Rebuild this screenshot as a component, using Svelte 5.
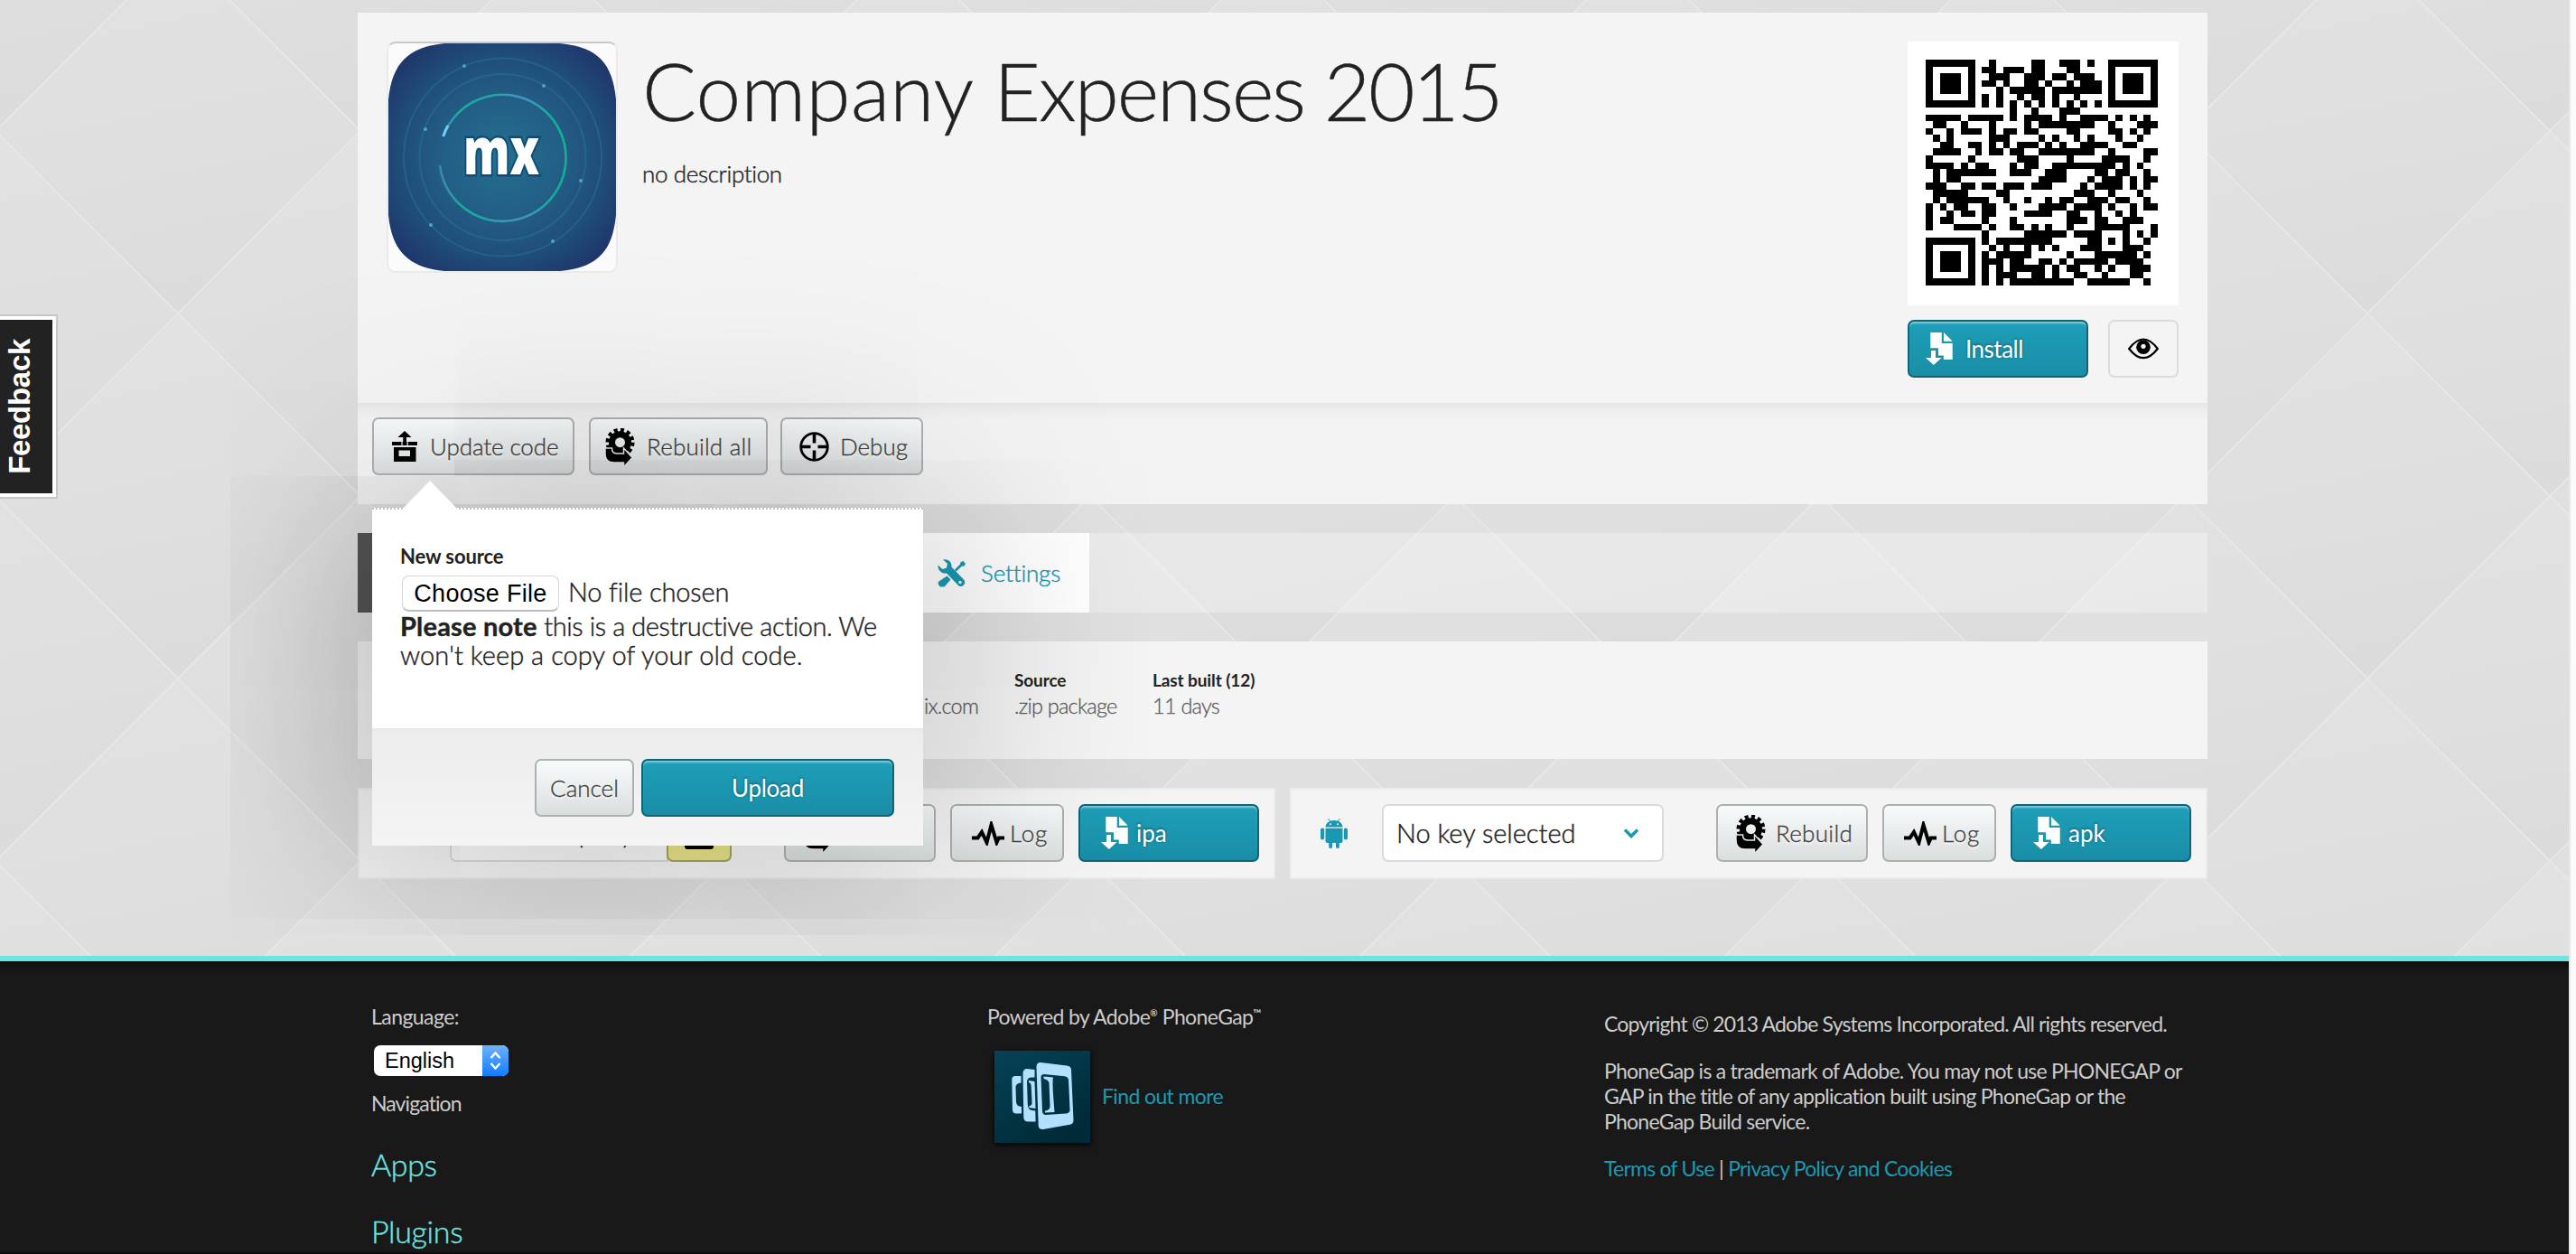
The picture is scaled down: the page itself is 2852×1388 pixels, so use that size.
<script>
  // Filled column ranges of each row of the code, "a-b" inclusive.
  const code = [
    '0-6 9 15-16 19-21 23 26-32', '0 6 8-9 11-13 15-16 20-21 26 32', '0 2-4 6 9-11 14-16 18-19 21-23 26 28-30 32',
    '0 2-4 6 8-9 11 14-15 17 20 22-24 26 28-30 32', '0 2-4 6 10 12-16 18-24 26 28-30 32', '0 6 8 10 13 15-16 18 21 26 32',
    '0-6 8 10 12 14 16 18 20 22 24 26-32', '12 15 19-21', '0-4 6-10 12 14-17 19 22-25 27 29 31', '1-2 5 9 14 16-23 26 30-32',
    '0 3 5-7 9 11-12 14-15 20-21 26-27 29 31', '1 3 9-11 16 18 21 23 27 30', '2-3 6-7 9 11 13-15 17 19 22-25 28-29',
    '1-4 7 9-10 12-13 16-23 26 31-32', '0 6 13-15 20 25-28 31', '0-3 5 7-8 12 14-15 18-26 28 30', '1 3-9 12-14 17-19 24-25 27-28 31',
    '1 3-4 16-19 23 25-27 29 31-32', '0-2 5-6 8-9 11-13 15-17 22 24-27 29 31', '1-5 10-11 21-23 26 30', '1 3-8 11 14 17 19-20 23-25 27-28 31',
    '0 2 4-5 8-9 12 16-19 21-24 26 29 31-32', '0 3 5-6 8-9 14-17 20-21 24 27 29', '0 2-3 8 12 20-22 24-25 28-30', '0 4-7 9 12-13 15 17 20 24-28 32',
    '8 14-19 21-24 28 30 32', '0-6 8 10-17 23-24 26 28 31', '0 6 9 11 14 16 18 22-24 28-30', '0 2-4 6 8 10-14 20 24-29 31',
    '0 2-4 6 8-10 12-13 16-17 19 21-25 27-30', '0 2-4 6 8 10 12-16 18 20-21 24 26 29-31', '0 6 8 10-12 15-16 18 21-22 25 29-30', '0-6 8 10 12-20 23-28 31'
  ];
  const qrPath = code
    .flatMap((row, y) => row.split(' ').map((run) => {
      const [a, b = a] = run.split('-').map(Number);
      return `M${a} ${y}h${b - a + 1}v1h-${b - a + 1}z`;
    }))
    .join('');
  const dots = [[84, 25], [172, 47], [41, 95], [213, 152], [47, 201], [182, 219]];
</script>

{#snippet uploadIcon()}
  <svg width="28" height="34" viewBox="0 0 28 34"><path fill-rule="evenodd" d="M14 0 21.500 7H16v5h12v4H0v-4h12.300V7H6.500zM2 18h24.500v16H2zM7.500 21.500V28h12.500v-6.500z" /><path class="cut" d="M11 11.500v4.500M17.200 11.500v4.500" /></svg>
{/snippet}
{#snippet gearIcon()}
  <svg width="33" height="42" viewBox="0 0 33 42">
    <circle class="teeth" cx="16.500" cy="15.700" r="13.500" /><circle class="gear" cx="16.500" cy="15.700" r="9" />
    <path class="edge" d="M0 22h7.500c0 4 2 6 5 6h8v-6l9.500 10.500L20.500 43v-5H10C3 38 0 34 0 28z" />
  </svg>
{/snippet}
{#snippet targetIcon()}
  <svg width="33" height="33" viewBox="0 0 33 33"><g class="line"><circle cx="16.500" cy="16.500" r="14.800" stroke-width="2.800" /><path stroke-width="3.600" d="M16.500 1v11.500M16.500 20.500V32M1 16.500h11.500M20.500 16.500H32" /></g></svg>
{/snippet}
{#snippet logIcon()}
  <svg width="36" height="27" viewBox="0 0 36 27"><path class="line" stroke-width="4" d="M0 18.500H6.500L11 12l5.500 11.500L21.500 4l6 19.500 2.300-5H36" /></svg>
{/snippet}
{#snippet docIcon()}
  <svg width="30" height="36" viewBox="0 0 30 36"><path d="M5.300 0h12.400v12h12v18H19.800v-4.500H14v-8.200H5.300zM20 0l9.700 9.700H20zM6 20h5v8h6.600L8.800 36 0 28h6z" /></svg>
{/snippet}

<div class="page">
  <svg class="backdrop" width="2844" height="1058">
    <defs>
      <linearGradient id="facet" x1="0.3" y1="0" x2="0.5" y2="1"><stop offset="0" stop-color="#e2e2e2" /><stop offset="0.55" stop-color="#dfdfdf" /><stop offset="1" stop-color="#dbdbdb" /></linearGradient>
      <pattern id="diamonds" x="197" y="347" width="404" height="404" patternUnits="userSpaceOnUse">
        <g fill="url(#facet)" stroke="#e7e7e7" stroke-width="1.800">
          <path d="M0 0 202 202 0 404-202 202z" /><path d="M404 0 606 202 404 404 202 202z" />
          <path d="M202-202 404 0 202 202 0 0z" /><path d="M202 202 404 404 202 606 0 404z" />
        </g>
      </pattern>
    </defs>
    <rect width="2844" height="1058" fill="url(#diamonds)" />
  </svg>

  <div class="feedback"><span>Feedback</span></div>

  <main>
    <header class="hero">
      <div class="app-icon">
        <svg width="252" height="252" viewBox="0 0 252 252">
          <defs>
            <radialGradient id="sky" r="0.62"><stop offset="0" stop-color="#23708f" /><stop offset="0.4" stop-color="#235f87" /><stop offset="0.75" stop-color="#1f4b79" /><stop offset="1" stop-color="#1f3569" /></radialGradient>
            <linearGradient id="ring" x1="0" y1="0" x2="1" y2="0"><stop offset="0" stop-color="#3a86b5" /><stop offset="0.2" stop-color="#18b09a" /><stop offset="0.45" stop-color="#2aa0a8" /><stop offset="0.65" stop-color="#4493c4" /><stop offset="0.9" stop-color="#15ae97" /></linearGradient>
          </defs>
          <path fill="url(#sky)" d="M62 0H190C232 4 248 22 252 62V190C248 230 232 248 190 252H62C22 248 4 230 0 190V62C4 22 22 4 62 0z" />
          <g fill="none" stroke="#2a7f98" stroke-width="2" opacity="0.4"><circle cx="126.500" cy="126" r="92" /><circle cx="126.500" cy="126" r="109.500" /></g>
          <path d="M60.700 103A70 70 0 1 1 57 135" fill="none" stroke="url(#ring)" stroke-width="2.600" />
          <path d="M60.700 103A70 70 0 0 1 66 91" fill="none" stroke="#6bd0f5" stroke-width="3" />
          {#each dots as [x, y]}<circle cx={x} cy={y} r="2" fill="#4da3cf" />{/each}
          <text x="83" y="145" textLength="84" lengthAdjust="spacingAndGlyphs">mx</text>
        </svg>
      </div>
      <div class="title"><h1><span class="company">Company</span> <span class="expenses">Expenses</span> <span class="year">2015</span></h1><p>no description</p></div>
      <div class="install">
        <div class="qr"><svg width="257" height="250" viewBox="0 0 33 33" preserveAspectRatio="none" shape-rendering="crispEdges"><path d={qrPath} /></svg></div>
        <div class="install-row">
          <button class="btn teal w200"><i class="ic l">{@render docIcon()}</i><span class="s-install">Install</span></button>
          <button class="btn eye" aria-label="Visibility"><svg width="34" height="24" viewBox="0 0 34 24"><path class="line" stroke-width="2.200" d="M1.200 12Q9 1.500 17 1.500T32.800 12Q25 22.200 17 22.200T1.200 12z" /><circle cx="17" cy="10.300" r="7.800" /><circle cx="17" cy="9.300" r="2.600" fill="#f4f4f4" /></svg></button>
        </div>
      </div>
    </header>

    <nav class="toolbar">
      <button class="btn b-update"><i class="ic">{@render uploadIcon()}</i><span class="s-update">Update code</span></button>
      <button class="btn b-all"><i class="ic l">{@render gearIcon()}</i><span class="s-all">Rebuild all</span></button>
      <button class="btn b-debug"><i class="ic">{@render targetIcon()}</i><span>Debug</span></button>
    </nav>

    <div class="tabs">
      <div class="tab dark"></div>
      <div class="tab light">
        <svg width="31" height="31" viewBox="0 0 31 31"><path d="M6 .5C12-.5 16 3 15.500 8.500L29.500 23c2.500 4-2 8.500-6 6.500L10 15.500C5 16.500 0 12.500 .5 6.500L5.500 11 10 9.500 11 5z" /><path d="M19 11.500 25.500 5 25 3.500 28.500 2 31 5l-2 3-2-.5-6.500 6.300zM10.500 18.500l4 4-7 8H3L.8 28v-3z" /><circle cx="25" cy="25.500" r="1.700" fill="#f4f4f4" /></svg>
        <span>Settings</span>
      </div>
    </div>

    <section class="info">
      <dl class="owner"><dt>&nbsp;</dt><dd>ix.com</dd></dl>
      <dl class="source"><dt>Source</dt><dd>.zip package</dd></dl>
      <dl class="built"><dt>Last built (12)</dt><dd>11 days</dd></dl>
    </section>

    <div class="platforms">
      <section class="platform">
        <div class="key ios">Company</div>
        <button class="btn lock" aria-label="Lock"><svg width="32" height="30" viewBox="0 0 32 30"><rect y="8" width="32" height="22" rx="3" /></svg></button>
        <button class="btn b-rebuild"><i class="ic">{@render gearIcon()}</i><span>Rebuild</span></button>
        <button class="btn b-log"><i class="ic r">{@render logIcon()}</i><span>Log</span></button>
        <button class="btn teal w200"><i class="ic r">{@render docIcon()}</i><span>ipa</span></button>
      </section>
      <section class="platform">
        <svg class="android" width="30" height="33" viewBox="0 0 30 33"><path d="M5.500 9.500C5.500 5 10 2 15 2s9.500 3 9.500 7.500zM5.500 10.800h19V25q0 2-2 2h-1.700v4.500q0 1.500-1.900 1.500T17 31.500V27h-4v4.500q0 1.500-1.900 1.500t-1.900-1.500V27H7.500q-2 0-2-2z" /><rect y="10.500" width="4.200" height="13" rx="2.100" /><rect x="25.800" y="10.500" width="4.200" height="13" rx="2.100" /><path d="M8.500 0l2.500 3.500M21.500 0 19 3.500" stroke="#1b98b1" /><circle cx="11" cy="6.300" r="1" fill="#f4f4f4" /><circle cx="19" cy="6.300" r="1" fill="#f4f4f4" /></svg>
        <div class="key"><span>No key selected</span><svg width="18" height="11" viewBox="0 0 18 11"><path class="chev" d="M2 1.500 9 8.500 16 1.500" /></svg></div>
        <button class="btn b-rebuild"><i class="ic">{@render gearIcon()}</i><span>Rebuild</span></button>
        <button class="btn b-log"><i class="ic r">{@render logIcon()}</i><span>Log</span></button>
        <button class="btn teal w200"><i class="ic r">{@render docIcon()}</i><span>apk</span></button>
      </section>
    </div>
  </main>

  <div class="shade"></div>
  <div class="shade corner"></div>
  <div class="popover">
    <svg class="tip" width="64" height="33" viewBox="0 0 64 33"><path d="M32 0 64 33H0z" /></svg>
    <div class="body">
      <h2>New source</h2>
      <div class="file"><button>Choose File</button><span>No file chosen</span></div>
      <p><b>Please note</b> this is a destructive action. We<br /><span class="second">won't keep a copy of your old code.</span></p>
    </div>
    <div class="actions"><button class="btn b-cancel">Cancel</button><button class="btn teal b-upload">Upload</button></div>
  </div>

  <footer>
    <div class="col one">
      <p class="language">Language:</p>
      <div class="lang"><span>English</span><i><svg width="13" height="20" viewBox="0 0 13 20"><path d="M1.500 7 6.500 1.500 11.500 7M1.500 13 6.500 18.500 11.500 13" /></svg></i></div>
      <p class="navigation">Navigation</p>
      <a href="#apps" class="apps">Apps</a>
      <a href="#plugins">Plugins</a>
    </div>
    <div class="col two">
      <p>Powered by Adobe<sup>®</sup> PhoneGap<sup class="tm">™</sup></p>
      <div class="gap">
        <svg width="106" height="102" viewBox="0 0 106 102">
          <defs><linearGradient id="deep" x1="0" y1="0" x2="0.6" y2="1"><stop offset="0" stop-color="#054357" /><stop offset="1" stop-color="#002a38" /></linearGradient></defs>
          <rect width="106" height="102" fill="url(#deep)" />
          <g fill="#b3e0ff">
            <path fill-rule="evenodd" d="M51 13 80 16.500q5 .5 5 5L87.500 77q0 4-4 4.700L54 87q-5 .500-5.300-4L46.500 18q0-5 4.500-5zM55 26q-3.500 0-3.500 3.500L53 67q.3 4 4 4l22-1.500q4.500-.3 4.500-4L82 32.500q-.3-4-4.500-4.300z" />
            <path d="M54.500 28.500l10.500 1Q64 33 65 48.500L66.500 68 56 68.500V66.500q6-.5 5.500-6L60.500 36q-.5-4-6-5z" />
            <path d="M36 20l8.500 1v8.500h-3q-5.500 0-5.500 5l.8 25q.4 6 5 6.500l3.500.5.300 12h-8q-5 0-5.300-4.500L31.500 25q.3-5 4.500-5zM38 33l6.500 1 1 30-7-1v-2q3.500 0 3-4l-.8-18q-.2-3.500-2.700-4z" />
            <path d="M23 28l6.500 0v7.500q-6 .5-6 5l.500 16q.300 5 6 5.500v7.500l-6 0q-3.800 0-4-4L19.300 32q0-4 3.700-4z" />
          </g>
        </svg>
        <a href="#more">Find out more</a>
      </div>
    </div>
    <div class="col three">
      <p class="copyright">Copyright © 2013 Adobe Systems Incorporated. All rights reserved.</p>
      <p class="trademark">PhoneGap is a trademark of Adobe. You may not use PHONEGAP or<br />GAP in the title of any application built using PhoneGap or the<br />PhoneGap Build service.</p>
      <p class="terms"><a href="#terms">Terms of Use</a> | <a href="#privacy">Privacy Policy and Cookies</a></p>
    </div>
  </footer>
</div>

<style>
  :global(body) { background: #fafafa; overflow: hidden; }
  .page { position: relative; width: 2844px; height: 1388px; overflow: hidden; display: flex; flex-direction: column; background: #dedede; box-shadow: 2px 0 0 #e8e8e8; font-family: Lato, 'Open Sans', sans-serif; font-weight: 300; color: #222; font-variant-ligatures: none; }
  .page *, .page { box-sizing: border-box; }
  h1, h2, p, dl, dt, dd { margin: 0; font-weight: 300; }
  svg { display: block; flex: none; }
  .backdrop { position: absolute; left: 0; top: 0; }

  .feedback { position: absolute; left: 0; top: 348px; width: 64px; height: 204px; border: 2px solid #c6c6c6; border-left: 0; background: #222; box-shadow: inset 0 0 0 4px #fff; display: grid; place-items: center; }
  .feedback::before { content: ''; position: absolute; left: 0; top: 4px; width: 4px; height: 192px; background: #222; }
  .feedback span { writing-mode: vertical-rl; transform: rotate(180deg); color: #fff; font: bold 33px/40px 'Liberation Sans', sans-serif; letter-spacing: -0.3px; margin-right: 18px; }

  main { position: relative; width: 2048px; margin: 14px 0 0 396px; height: 1044px; flex: none; }
  .hero { display: flex; height: 432px; background: #f4f4f4; padding: 32px 32px 0; }
  .app-icon { width: 256px; height: 256px; border: 2px solid #ebebeb; border-top-color: #c8c8c8; border-radius: 10px; background: #fbfbfb; }
  .app-icon text { font: 800 72px 'Open Sans', sans-serif; fill: #fff; stroke: #0e4c78; stroke-width: 5px; paint-order: stroke; }
  .title { padding-left: 27px; flex: 1; }
  h1 { font-size: 89px; line-height: 108px; letter-spacing: -1.45px; word-spacing: -1px; -webkit-text-stroke: 0.4px; }
  .company { letter-spacing: 0.3px; }
  .expenses { letter-spacing: -2px; }
  .year { letter-spacing: -2.6px; }
  .title p { font-size: 26px; line-height: 32px; margin-top: 22px; letter-spacing: -0.35px; -webkit-text-stroke: 0.4px; }
  .install { width: 300px; }
  .qr { width: 300px; height: 292px; background: #fff; padding: 20px 0 0 20px; }
  .install-row { display: flex; justify-content: space-between; margin-top: 16px; }

  .btn { font: 300 26px/60px Lato, sans-serif; font-variant-ligatures: none; color: #3f3f3f; height: 64px; padding: 0; border: 2px solid #aeb0b0; border-radius: 7px; background: linear-gradient(#f8fbfc, #dadede); display: flex; align-items: center; text-shadow: 0 2px 2px #fff; white-space: nowrap; -webkit-text-stroke: 0.35px; }
  .btn.teal { color: #fff; font-weight: 400; -webkit-text-stroke: 0; border-color: #0f6476; background: linear-gradient(#1e9fb9, #1a8da6); box-shadow: inset 0 3px 2px -1px rgba(255, 255, 255, 0.45); text-shadow: 0 -1px 3px #0f5a6a; }
  .w200 { width: 200px; }
  .ic { width: 44px; margin: 0 8px 0 12px; display: flex; justify-content: center; }
  .ic.l { padding-right: 2px; margin-right: 6px; }
  .ic.r { padding-left: 8px; }
  .teal .ic.r { margin-right: 6px; }
  .b-all .ic.l { padding-right: 3px; }
  .b-update .ic { margin-right: 6px; }
  .b-log .ic.r { padding-left: 11px; }
  .b-debug .ic { padding-left: 3px; }
  .b-rebuild .ic { padding-left: 4px; padding-top: 2px; }
  .b-all .ic { padding-top: 2px; }
  .teal svg { fill: #fff; }
  .teeth { fill: none; stroke: #000; stroke-width: 5px; stroke-dasharray: 3.9 3.169; }
  .gear { fill: none; stroke: #000; stroke-width: 7px; }
  .edge { stroke: #e3e7e8; stroke-width: 1.5px; }
  .cut { stroke: #e9ecee; stroke-width: 1.2px; }
  .line { fill: none; stroke: #000; }
  .eye { width: 78px; justify-content: center; background: #f4f4f4; border-color: #dcdcdc; }
  .s-install { letter-spacing: -0.5px; }
  .s-update { letter-spacing: -0.1px; }
  .s-all { letter-spacing: 0.2px; }

  .toolbar { display: flex; height: 112px; padding: 16px 16px 0; background: linear-gradient(#e6e6e6, #efefef 10px, #f3f3f3 20px); }
  .b-update { width: 224px; margin-right: 16px; }
  .b-all { width: 198px; margin-right: 14px; }
  .b-debug { width: 158px; }

  .tabs { display: flex; height: 88px; margin-top: 32px; background: rgba(255, 255, 255, 0.3); }
  .tab.dark { width: 200px; background: #555; }
  .tab.light { width: 610px; background: #fff; display: flex; align-items: center; justify-content: flex-end; padding-right: 32px; color: #1b98b1; }
  .tab.light svg { fill: #1b98b1; margin-right: 17px; }
  .tab span { font-size: 26px; line-height: 44px; letter-spacing: -0.2px; -webkit-text-stroke: 0.4px; }

  .info { display: flex; height: 130px; margin-top: 32px; background: #f4f4f4; padding-top: 30px; }
  dt { font-size: 19px; line-height: 26px; font-weight: 700; letter-spacing: -0.1px; }
  dd { font-size: 23.5px; line-height: 28px; margin-top: 1px; color: #5c5c5c; letter-spacing: -0.75px; -webkit-text-stroke: 0.3px; }
  .owner { width: 727px; padding-left: 627px; }
  .source { width: 153px; }

  .platforms { display: flex; gap: 16px; margin-top: 32px; }
  .platform { display: flex; width: 1016px; height: 101px; border: 2px solid #ebebeb; background: #f4f4f4; padding: 16px 16px 0; }
  .b-rebuild { width: 168px; margin: 0 16px 0 auto; letter-spacing: 0.3px; }
  .b-log { width: 126px; margin-right: 16px; letter-spacing: 0.8px; }
  .key { display: flex; align-items: center; justify-content: space-between; width: 312px; height: 64px; border: 2px solid #dadada; border-radius: 7px; background: #fff; font-size: 29px; line-height: 60px; padding: 0 25px 0 14px; -webkit-text-stroke: 0.4px; }
  .key.ios { margin-left: 84px; width: 242px; padding-left: 82px; background: #f8f8f8; border-radius: 7px 0 0 7px; }
  .lock { width: 72px; margin-left: -2px; justify-content: center; background: #e6e48a; border-color: #a3a35c; padding-top: 6px; }
  .android { fill: #1b98b1; margin: 16px 38px 0 16px; }
  .chev { fill: none; stroke: #1b98b1; stroke-width: 3.5px; }

  .shade { position: absolute; left: 412px; top: 562px; width: 610px; height: 374px; box-shadow: 0 -5px 250px rgba(0, 0, 0, 0.36); clip-path: polygon(-163px -35px, 91px -35px, 91px -289px, 880px -289px, 880px 473px, -163px 473px); }
  .shade.corner { opacity: 0.6; clip-path: polygon(-163px -289px, 91px -289px, 91px -35px, -163px -35px); }
  .popover { position: absolute; left: 412px; top: 562px; width: 610px; height: 374px; background: #fff; border-top: 2px dotted #c4c4c4; }
  .tip { position: absolute; left: 32px; top: -32px; fill: #fff; }
  .body { height: 242px; padding: 38px 31px 0; }
  h2 { font-size: 22px; line-height: 28px; font-weight: 700; letter-spacing: -0.1px; }
  .file { display: flex; align-items: center; margin-top: 7px; height: 40px; }
  .file button { font: 27px/36px 'Liberation Sans', sans-serif; letter-spacing: 0.3px; width: 174px; height: 40px; margin-left: 2px; padding: 0; border: 1px solid #d6d6d6; border-bottom: 2px solid #bdbdbd; border-radius: 8px; background: #fff; color: #000; }
  .file span { font-size: 29px; margin-left: 10px; line-height: 36px; padding-bottom: 4px; letter-spacing: -0.15px; -webkit-text-stroke: 0.4px; }
  .body p { font-size: 29px; line-height: 32px; letter-spacing: -0.4px; white-space: nowrap; -webkit-text-stroke: 0.4px; }
  .body b { font-weight: 700; letter-spacing: 0.2px; }
  .body .second { letter-spacing: 0.06px; }
  .actions { height: 130px; display: flex; justify-content: flex-end; padding: 34px 32px 0; background: linear-gradient(#e9e9e9, #ededed 6px, #f4f4f4); }
  .b-cancel { width: 110px; justify-content: center; margin-right: 8px; }
  .b-upload { width: 280px; justify-content: center; letter-spacing: -0.3px; }

  footer { position: relative; flex: 1; border-top: 6px solid #6ee4e0; background: linear-gradient(#0f0f0f, #191919 16px); color: #ccc; font-size: 23px; font-weight: 400; display: flex; box-shadow: inset 0 -2px 0 #0d0d0d; }
  footer p { font-weight: 400; line-height: 28px; }
  footer a { color: #1b9ab4; text-decoration: none; }
  .one { margin-left: 411px; width: 682px; padding-top: 47px; display: flex; flex-direction: column; align-items: flex-start; }
  .language { letter-spacing: -0.55px; }
  .navigation { letter-spacing: -0.9px; margin-top: -3px; }
  .lang { display: flex; width: 149px; height: 34px; margin: 18px 0 19px 3px; border-radius: 7px; background: #fff; overflow: hidden; color: #000; font: 23.5px/34px 'Liberation Sans', sans-serif; }
  .lang span { flex: 1; padding-left: 12px; }
  .lang i { width: 29px; display: grid; place-items: center; background: linear-gradient(#6db3fa, #127bfe); }
  .lang svg { fill: none; stroke: #fff; stroke-width: 2.5px; }
  .one a { font-size: 34px; line-height: 42px; color: #6ee4e0; font-weight: 300; margin-top: 32px; letter-spacing: -0.35px; -webkit-text-stroke: 0.4px; }
  .one .apps { margin-top: 33px; }
  .two { width: 683px; padding-top: 47px; letter-spacing: -0.62px; }
  sup { font-size: 10px; line-height: 0; vertical-align: 9px; font-weight: 700; letter-spacing: 0; }
  .tm { font-size: 12px; vertical-align: 8px; }
  .gap { display: flex; align-items: center; margin: 24px 0 0 8px; }
  .gap svg { box-shadow: 0 2px 6px #000; }
  .gap a { margin: -3px 0 0 13px; }
  .three { padding-top: 55px; white-space: nowrap; letter-spacing: -0.76px; }
  .copyright { letter-spacing: -0.84px; }
  .trademark, .terms { margin-top: 24px; }
  .terms { letter-spacing: -0.75px; }
</style>
